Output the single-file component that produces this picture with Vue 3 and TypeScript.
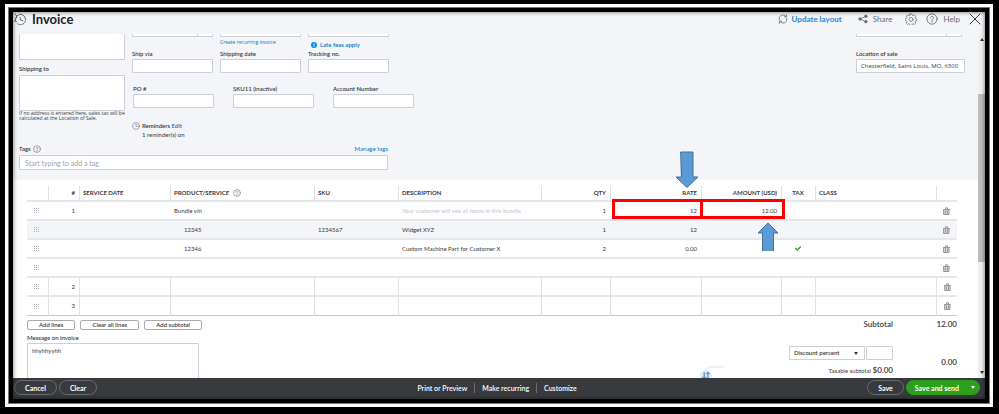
<script setup lang="ts">
import { ref } from 'vue'

interface Line {
  num: string
  product: string
  child: boolean
  sku: string
  description: string
  placeholder: boolean
  qty: string
  rate: string
  amount: string
  taxed: boolean
  ruled: boolean
}

const line = (values: Partial<Line>): Line => ({
  num: '', product: '', child: false, sku: '', description: '', placeholder: false,
  qty: '', rate: '', amount: '', taxed: false, ruled: false, ...values,
})

const lines: Line[] = [
  line({ num: '1', product: 'Bundle vin', description: 'Your customer will see all items in this bundle', placeholder: true, qty: '1', rate: '12', amount: '12.00' }),
  line({ product: '12345', child: true, sku: '1234567', description: 'Widget XYZ', qty: '1', rate: '12' }),
  line({ product: '12346', child: true, description: 'Custom Machine Part for Customer X', qty: '2', rate: '0.00', taxed: true }),
  line({}),
  line({ num: '2', ruled: true }),
  line({ num: '3', ruled: true }),
]

const customFields = [
  { id: 'po', label: 'PO #' },
  { id: 'sku11', label: 'SKU11 (inactive)' },
  { id: 'account', label: 'Account Number' },
]
const shippingFields = [
  { id: 'ship-via', label: 'Ship via' },
  { id: 'ship-date', label: 'Shipping date' },
  { id: 'tracking', label: 'Tracking no.' },
]

const location = ref('Chesterfield, Saint Louis, MO, 6300')
const message = ref('hhyhhyyhh')
</script>

<template>
  <div class="backdrop">
    <div class="window">
      <header class="topbar">
        <svg class="ic-history" viewBox="0 0 14 14">
          <path d="M3 3.2A5.4 5.4 0 0 1 12.4 7" />
          <path d="M12.3 8.4A5.4 5.4 0 0 1 3.4 11.2" stroke-dasharray="2 1.6" />
          <path d="M1.6 8.6A5.4 5.4 0 0 1 3 3.2M1.4 1.6l1.7 1.5L2.7 5.4M0 9.2l1.6-.8 1.2 1.2M6.600 4.600v2.700l2.800 1" />
        </svg>
        <h1>Invoice</h1>
        <nav class="tools">
          <a class="update" href="#">
            <svg viewBox="0 0 12 12"><path d="M1.4 6.8A4.6 4.6 0 0 1 9.6 3M10.6 5.2A4.6 4.6 0 0 1 2.4 9M10.3.8v2.6H7.7M1.7 11.2V8.6h2.6" /></svg>
            Update layout
          </a>
          <a class="share" href="#">
            <svg viewBox="0 0 12 12"><circle cx="2.4" cy="6" r="1.5" /><circle cx="9.4" cy="2.8" r="1.5" /><circle cx="9.4" cy="9.2" r="1.5" /><path d="M3.8 5.4 8 3.4M3.8 6.6 8 8.6" /></svg>
            Share
          </a>
          <button class="icon gear" aria-label="Settings">
            <svg viewBox="-8 -8 16 16">
              <path d="M-1.300-6.800h2.600l.5 1.900 1.200.5 1.700-1 1.700 1.700-1 1.700.5 1.200 1.900.5v2.400l-1.900.5-.5 1.200 1 1.700-1.700 1.700-1.700-1-1.200.5-.5 1.900h-2.600l-.5-1.900-1.200-.5-1.700 1-1.700-1.700 1-1.700-.5-1.200-1.900-.5v-2.400l1.900-.5.5-1.200-1-1.700 1.700-1.700 1.700 1 1.200-.5z" />
              <circle cx="0" cy="0.500" r="2.700" />
            </svg>
          </button>
          <a class="help" href="#">
            <svg viewBox="0 0 14 14"><circle cx="7" cy="7" r="6" /><path d="M5.200 5.600a1.800 1.700 0 1 1 2.700 1.500c-.7.4-.9.700-.9 1.400M7 9.700v1" /></svg>
            Help
          </a>
          <button class="icon close" aria-label="Close">
            <svg viewBox="0 0 12 12"><path d="M1 1l10 10M11 1 1 11" /></svg>
          </button>
        </nav>
      </header>

      <div class="viewport">
        <main class="content">
          <form class="details" @submit.prevent>
            <div class="columns">
              <div class="addresses">
                <textarea class="cut bill" aria-label="Billing address"></textarea>
                <label for="ship-to">Shipping to</label>
                <textarea id="ship-to"></textarea>
                <p class="hint">If no address is entered here, sales tax will be calculated at the Location of Sale.</p>
              </div>

              <div class="middle">
                <div class="fields first">
                  <div><div class="cut stub split"></div></div>
                  <div><div class="cut stub"></div><a class="recurring" href="#">Create recurring invoice</a></div>
                  <div>
                    <div class="cut stub"></div>
                    <a class="fees" href="#">
                      <svg viewBox="0 0 8 8"><circle cx="4" cy="4" r="4" /><path d="M4 3.500v2.500M4 1.900v.8" /></svg>Late fees apply
                    </a>
                  </div>
                </div>
                <div class="fields">
                  <div v-for="f in shippingFields" :key="f.id">
                    <label :for="f.id">{{ f.label }}</label>
                    <input :id="f.id" type="text">
                  </div>
                </div>
                <div class="fields custom">
                  <div v-for="f in customFields" :key="f.id">
                    <label :for="f.id">{{ f.label }}</label>
                    <input :id="f.id" type="text">
                  </div>
                </div>
                <div class="reminders">
                  <svg viewBox="0 0 14 14"><circle cx="7" cy="7" r="6" /><path d="M7 3.500V7.500h3.500" /></svg>
                  <p>Reminders <a href="#">Edit</a></p>
                  <p class="count">1 reminder(s) on</p>
                </div>
              </div>

              <div class="place">
                <div class="cut stub split"></div>
                <label for="location">Location of sale</label>
                <input id="location" v-model="location" type="text">
              </div>
            </div>

            <div class="tags">
              <div class="tags-head">
                <label for="tags">Tags</label>
                <svg class="q" viewBox="0 0 14 14"><circle cx="7" cy="7" r="6" /><path d="M5.200 5.600a1.800 1.700 0 1 1 2.700 1.500c-.7.4-.9.700-.9 1.400M7 9.700v1" /></svg>
                <a href="#">Manage tags</a>
              </div>
              <input id="tags" type="text" placeholder="Start typing to add a tag">
            </div>
          </form>

          <section class="items">
            <table>
              <colgroup>
                <col class="c-grip"><col class="c-num"><col class="c-date"><col class="c-product"><col class="c-sku"><col>
                <col class="c-qty"><col class="c-rate"><col class="c-amount"><col class="c-tax"><col class="c-class"><col class="c-trash">
              </colgroup>
              <thead>
                <tr>
                  <th></th>
                  <th class="right">#</th>
                  <th>SERVICE DATE</th>
                  <th class="product">PRODUCT/SERVICE
                    <svg class="q" viewBox="0 0 14 14"><circle cx="7" cy="7" r="6" /><path d="M5.200 5.600a1.800 1.700 0 1 1 2.700 1.500c-.7.4-.9.700-.9 1.400M7 9.700v1" /></svg>
                  </th>
                  <th>SKU</th>
                  <th>DESCRIPTION</th>
                  <th class="right">QTY</th>
                  <th class="right">RATE
                    <svg class="arrow down" viewBox="0 0 24 37"><path d="M6 1h12v25h5L12 36.500 1 26h5z" /></svg>
                  </th>
                  <th class="right">AMOUNT (USD)</th>
                  <th class="center">TAX</th>
                  <th>CLASS</th>
                  <th></th>
                </tr>
              </thead>
              <tbody>
                <tr v-for="(row, i) in lines" :key="i" :class="{ shaded: i === 1, ruled: row.ruled }">
                  <td class="grip">
                    <svg viewBox="0 0 5 5"><path d="M0 .5h5M0 2.500h5M0 4.500h5" stroke-dasharray="1 1" /></svg>
                  </td>
                  <td class="right">{{ row.num }}</td>
                  <td></td>
                  <td :class="{ child: row.child }">{{ row.product }}</td>
                  <td>{{ row.sku }}</td>
                  <td :class="{ faint: row.placeholder }">{{ row.description }}</td>
                  <td class="right">{{ row.qty }}</td>
                  <td class="right">{{ row.rate }}<span v-if="i === 0" class="mark rate-mark"></span></td>
                  <td class="right">{{ row.amount }}<span v-if="i === 0" class="mark amount-mark"></span>
                    <svg v-if="i === 0" class="arrow up" viewBox="0 0 22 29"><path d="M5.500 28.500V11H1L11 1l10 10h-4.500v17.500z" /></svg>
                  </td>
                  <td class="center"><svg v-if="row.taxed" class="tick" viewBox="0 0 6 5"><path d="M.7 2.400l1.600 1.500L5.400 1" /></svg></td>
                  <td></td>
                  <td class="center">
                    <button class="trash" aria-label="Delete line">
                      <svg viewBox="0 0 7 8"><path class="body" d="M1 2.500h5v5H1z" /><path d="M.5 2.500h6M2.500 2.300V.8h2v1.500M2.500 3.800v2.500M4.500 3.800v2.500" /></svg>
                    </button>
                  </td>
                </tr>
              </tbody>
            </table>

            <div class="below">
              <div class="below-left">
                <div class="actions">
                  <button>Add lines</button>
                  <button>Clear all lines</button>
                  <button>Add subtotal</button>
                </div>
                <label for="message">Message on invoice</label>
                <textarea id="message" v-model="message"></textarea>
              </div>

              <svg class="swap" viewBox="0 0 24 14">
                <path class="wire" d="M6 5C6 2 8 1 11 1h12" />
                <circle cx="6" cy="10" r="6" />
                <path class="glyph" d="M4.200 6.500v6M2.700 11l1.500 1.700L5.700 11M7.900 12.500v-6M6.400 8l1.500-1.700L9.400 8" />
              </svg>

              <div class="totals">
                <div class="total-row big"><span>Subtotal</span><span class="value">12.00</span></div>
                <div class="total-row discount">
                  <span class="pick">
                    <select aria-label="Discount type"><option>Discount percent</option></select>
                    <input type="text" aria-label="Discount value">
                  </span>
                  <span class="value">0.00</span>
                </div>
                <div class="total-row tax"><span>Taxable subtotal <b>$0.00</b></span><span class="value"></span></div>
              </div>
            </div>
          </section>
        </main>
        <div class="scrollbar">
          <i class="tip top"></i>
          <i class="thumb"></i>
          <i class="tip bottom"></i>
        </div>
      </div>

      <footer class="bottombar">
        <div class="side">
          <button class="pill">Cancel</button>
          <button class="pill">Clear</button>
        </div>
        <div class="links">
          <a href="#">Print or Preview</a>
          <a href="#">Make recurring</a>
          <a href="#">Customize</a>
        </div>
        <div class="side end">
          <button class="pill">Save</button>
          <button class="pill send">Save and send<i></i></button>
        </div>
      </footer>
    </div>
  </div>
</template>

<style>
body {
  background: #000;
}
</style>

<style scoped>
* {
  box-sizing: border-box;
}

.backdrop {
  height: 100vh;
  padding: 4px 6px 7px 5px;
  background: #000;
  font: 6px/8px Lato, "Liberation Sans", sans-serif;
  color: #393a3d;
}

.window {
  position: relative;
  display: flex;
  flex-direction: column;
  height: 100%;
  padding: 4px;
  border: 4px solid #fff;
  outline: 1px solid #777;
  outline-offset: -4px;
  background: #000;
}

.window::after {
  content: "";
  position: absolute;
  inset: 4px;
  box-shadow: inset 0 0 4px rgba(0, 0, 0, 0.6);
  pointer-events: none;
}

p,
h1 {
  margin: 0;
}

a {
  color: #0077c5;
  text-decoration: none;
}

svg {
  display: block;
  flex: none;
  fill: none;
  stroke: #6b6c72;
  stroke-linecap: round;
  stroke-linejoin: round;
}

button,
input,
textarea,
select {
  margin: 0;
  padding: 0;
  border: 0;
  background: none;
  font: inherit;
  color: inherit;
}

label {
  display: block;
  font-weight: 600;
}

input,
textarea,
.cut {
  display: block;
  width: 100%;
  border: 1px solid #cdcfd6;
  border-radius: 1px;
  background: #fff;
}

textarea {
  resize: none;
  overflow: hidden;
}

.cut {
  border-top: 0;
}

/* Top bar */
.topbar {
  display: flex;
  align-items: center;
  height: 22px;
  padding: 0 4px 8px 1px;
  background: #f4f5f8;
}

.ic-history {
  width: 13px;
  height: 13px;
  stroke: #55565c;
}

h1 {
  margin-left: 5px;
  font-size: 13px;
  line-height: 14px;
  font-weight: 700;
  color: #222327;
}

.tools {
  display: flex;
  align-items: center;
  margin-left: auto;
  font-size: 8px;
}

.tools a {
  display: flex;
  align-items: center;
  gap: 5px;
  color: #6b6c72;
}

.tools .update {
  gap: 4px;
  font-weight: 700;
  color: #2787d0;
}

.update svg,
.share svg {
  width: 10px;
  height: 10px;
}

.share {
  margin-left: 16px;
}

.share svg circle {
  fill: #6b6c72;
}

.gear {
  margin-left: 13px;
}

.gear svg,
.help svg {
  width: 12px;
  height: 12px;
}

.help {
  margin-left: 9px;
}

.close {
  margin-left: 9px;
}

.close svg {
  width: 12px;
  height: 12px;
  stroke: #393a3d;
}

/* Scrolling body */
.viewport {
  display: flex;
  flex: 1;
  min-height: 0;
  background: #fff;
}

.content {
  flex: 1;
  min-width: 0;
  overflow: hidden;
}

.scrollbar {
  display: flex;
  flex-direction: column;
  align-items: center;
  width: 7px;
  padding: 4px 0;
  background: #f0f0f0;
}

.thumb {
  width: 100%;
  height: 168px;
  margin-top: 53px;
  background: #bdbdbd;
}

.tip {
  border: 2px solid transparent;
}

.tip.top {
  border-top: 0;
  border-bottom: 3px solid #333;
}

.tip.bottom {
  margin-top: auto;
  border-bottom: 0;
  border-top: 3px solid #333;
}

/* Invoice details */
.details {
  padding: 0 13px 10px 6px;
  background: #f4f5f8;
}

.columns {
  display: flex;
  gap: 7px;
}

.addresses {
  width: 106px;
}

.bill {
  height: 26px;
}

.addresses label {
  margin: 5px 0 2px;
}

.addresses textarea:not(.bill) {
  height: 36px;
}

.hint {
  width: 116px;
  font: 5px/5px "Open Sans", sans-serif;
}

.fields {
  display: flex;
  gap: 7px;
}

.fields > div {
  width: 81px;
}

.first {
  height: 16px;
}

.stub {
  height: 3px;
}

.split::after {
  content: "";
  display: block;
  height: 2px;
  margin-right: 14px;
  border-right: 1px solid #cdcfd6;
}

.recurring {
  display: block;
  font: 5px/10px "Open Sans", sans-serif;
  white-space: nowrap;
}

.fees {
  display: flex;
  align-items: center;
  gap: 3px;
  margin: 4px 0 0 3px;
  font-weight: 600;
}

.fees svg {
  width: 6px;
  height: 6px;
  stroke: #fff;
}

.fees svg circle {
  fill: #0090e8;
  stroke: none;
}

.fields label,
.place label {
  margin-bottom: 1px;
}

.fields input,
.place input {
  height: 14px;
}

.custom {
  gap: 19px;
  margin: 12px 0 14px 1px;
}

.reminders {
  display: grid;
  grid-template-columns: 8px 1fr;
  column-gap: 2px;
  row-gap: 1px;
  align-items: center;
  font-weight: 600;
}

.reminders svg {
  width: 8px;
  height: 8px;
}

.reminders .count {
  grid-column: 2;
  font-weight: 400;
}

.place {
  width: 109px;
  margin-left: auto;
}

.place .stub {
  width: 106px;
  margin-bottom: 13px;
}

.place input {
  padding: 0 3px 0 4px;
  font-family: "Open Sans", sans-serif;
}

.tags {
  width: 369px;
  margin-top: 6px;
}

.tags-head {
  display: flex;
  align-items: center;
  gap: 2px;
  margin-bottom: 2px;
}

.tags-head a {
  margin-left: auto;
}

.q {
  width: 8px;
  height: 8px;
}

.tags input {
  height: 15px;
  padding: 0 5px;
  font-size: 7px;
}

.tags input::placeholder {
  color: #a0a3aa;
}

/* Line items */
.items {
  padding: 6px 21px 0 14px;
}

table {
  width: 100%;
  border-collapse: separate;
  border-spacing: 0;
  table-layout: fixed;
}

.c-grip { width: 21px; }
.c-num { width: 31px; }
.c-date { width: 91px; }
.c-product { width: 144px; }
.c-sku { width: 84px; }
.c-qty { width: 69px; }
.c-rate { width: 91px; }
.c-amount { width: 80px; }
.c-tax { width: 34px; }
.c-class { width: 121px; }
.c-trash { width: 21px; }

th,
td {
  position: relative;
  height: 19px;
  padding: 0 4px;
  border-bottom: 2px solid #e6e7ea;
  text-align: left;
  font-weight: 400;
  white-space: nowrap;
}

th {
  height: 16px;
  padding-left: 3px;
  font-weight: 700;
}

th + th,
.ruled td + td {
  border-left: 1px solid #dfe1e5;
}

.product svg {
  display: inline-block;
  margin-left: 2px;
  vertical-align: middle;
}

.right {
  text-align: right;
}

.center {
  text-align: center;
}

.child {
  padding-left: 14px;
}

.faint {
  color: #c3c6cd;
}

.shaded td {
  background: #f4f5f8;
}

tbody tr:last-child td {
  border-bottom: 1px solid #c4c6ca;
}

.grip svg {
  width: 5px;
  height: 5px;
  margin-left: 3px;
  stroke: #a9abb0;
  stroke-linecap: butt;
}

.tick {
  width: 6px;
  height: 5px;
  margin: auto;
  stroke: #2ca01c;
  stroke-width: 1.4;
}

.trash {
  display: block;
  margin: auto;
}

.trash svg {
  width: 7px;
  height: 8px;
  stroke: #96989d;
}

.trash .body {
  fill: #d5d6d9;
}

.mark {
  position: absolute;
  z-index: 1;
  border: 3px solid #f00;
}

.rate-mark {
  inset: -3px -2px 0 2px;
}

.amount-mark {
  inset: -3px -4px 0 -1px;
}

.arrow {
  position: absolute;
  z-index: 2;
  fill: #5b9bd5;
  stroke: #41719c;
}

.down {
  top: -35px;
  right: 2px;
  width: 24px;
  height: 37px;
}

.up {
  top: 20px;
  right: 2px;
  width: 22px;
  height: 29px;
}

/* Below the table */
.below {
  display: flex;
  padding-top: 4px;
}

.actions {
  display: flex;
  gap: 5px;
  margin-bottom: 4px;
}

.actions button {
  height: 10px;
  padding: 0 11px;
  border: 1px solid #a9abb1;
  border-radius: 2px;
  background: #fff;
  font-weight: 600;
  line-height: 8px;
}

.below-left textarea {
  width: 172px;
  height: 48px;
  margin-top: 1px;
  padding: 3px 4px;
}

.swap {
  width: 24px;
  height: 14px;
  margin: 46px 0 0 auto;
  stroke: none;
}

.swap circle {
  fill: #dcebfa;
}

.swap .wire {
  stroke: #dde3ee;
}

.swap .glyph {
  stroke: #3a78b8;
}

.totals {
  width: 168px;
  margin-left: 65px;
}

.total-row {
  display: flex;
  justify-content: flex-end;
}

.value {
  width: 64px;
  text-align: right;
}

.big,
.value,
.tax b {
  font-size: 8px;
  font-weight: 600;
}

.discount {
  margin: 18px 0 0;
}

.discount .value {
  padding-top: 12px;
}

.pick {
  position: relative;
  display: flex;
  gap: 1px;
  height: 14px;
}

.pick select {
  width: 76px;
  padding: 0 4px;
  border: 1px solid #cdcfd6;
  background: #fff;
  appearance: none;
  font-weight: 600;
}

.pick::after {
  content: "";
  position: absolute;
  left: 65px;
  top: 6px;
  border: 2px solid transparent;
  border-top: 3px solid #393a3d;
  border-bottom: 0;
  pointer-events: none;
}

.pick input {
  width: 27px;
}

/* Footer */
.bottombar {
  display: flex;
  align-items: center;
  height: 21px;
  padding: 0 5px 2px 1px;
  background: #393a3d;
  font-size: 7px;
  color: #fff;
}

.side {
  display: flex;
  flex: 1;
  gap: 2px;
}

.end {
  justify-content: flex-end;
}

.pill {
  height: 15px;
  padding: 0 10px;
  border: 1px solid #6b6c72;
  border-radius: 8px;
  font-weight: 700;
}

.send {
  display: flex;
  align-items: center;
  gap: 12px;
  padding: 0 4px 0 8px;
  border-color: #2ca01c;
  background: #2ca01c;
}

.send i {
  border: 2px solid transparent;
  border-top: 3px solid #fff;
  border-bottom: 0;
}

.links {
  display: flex;
}

.links a {
  padding: 1px 7px;
  font-weight: 600;
  color: #fff;
}

.links a + a {
  border-left: 1px solid #6b6c72;
}
</style>
